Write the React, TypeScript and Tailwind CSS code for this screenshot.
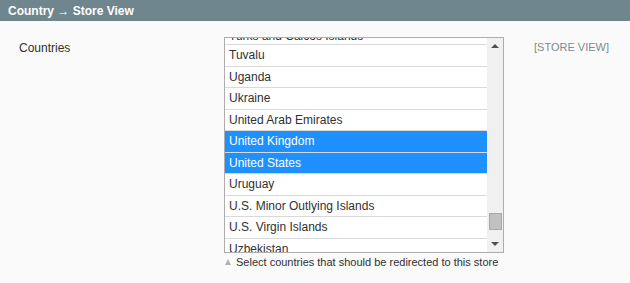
import React from 'react';

const countries = [
  'Turks and Caicos Islands',
  'Tuvalu',
  'Uganda',
  'Ukraine',
  'United Arab Emirates',
  'United Kingdom',
  'United States',
  'Uruguay',
  'U.S. Minor Outlying Islands',
  'U.S. Virgin Islands',
  'Uzbekistan',
  'Vanuatu',
];

const selected = ['United Kingdom', 'United States'];

export default function App() {
  return (
    <div className="w-[630px] h-[283px] bg-[#fafafa] font-['Liberation_Sans',Arial,sans-serif] text-[#303030] overflow-hidden">
      {/* header */}
      <div className="h-[21px] bg-[#6f868e] flex items-center pl-2 text-white text-[12px] font-bold">
        Country → Store View
      </div>

      {/* row */}
      <div className="flex pt-4">
        <div className="w-[224px] pl-[19px] pt-[2px] text-[12px] text-[#303030]">Countries</div>

        <div className="flex flex-col">
          {/* select box */}
          <div className="w-[280px] h-[216px] border border-[#adadad] bg-white flex">
            <div className="flex-1 overflow-hidden">
              <div className="-mt-[14.5px]">
                {countries.map((c, i) => {
                  const on = selected.includes(c);
                  return (
                    <div
                      key={c}
                      className={`h-[21.5px] border-b border-[#d9d9d9] pl-1 flex text-[12px] leading-[14px] ${
                        i === 0 ? 'items-end pb-[1px]' : 'items-center'
                      } ${on ? 'bg-[#1e90ff] text-white' : 'text-[#303030]'}`}
                    >
                      {c}
                    </div>
                  );
                })}
              </div>
            </div>

            {/* scrollbar */}
            <div className="w-[16px] bg-[#f0f0f0] flex flex-col items-center">
              <div className="h-[16px] flex items-center justify-center">
                <div className="w-0 h-0 border-l-[4px] border-r-[4px] border-b-[4px] border-l-transparent border-r-transparent border-b-[#505050]" />
              </div>
              <div className="flex-1 w-full flex flex-col justify-end pl-[2px] pr-[1px] pb-[6px]">
                <div className="h-[17px] bg-[#c1c1c1] border border-[#a8a8a8]" />
              </div>
              <div className="h-[16px] flex items-center justify-center">
                <div className="w-0 h-0 border-l-[4px] border-r-[4px] border-t-[4px] border-l-transparent border-r-transparent border-t-[#505050]" />
              </div>
            </div>
          </div>

          {/* hint */}
          <div className="flex items-center gap-[5px] pl-[1px] pt-[1px] text-[11px] text-[#303030]">
            <div className="w-0 h-0 border-l-[3.5px] border-r-[3.5px] border-b-[6px] border-l-transparent border-r-transparent border-b-[#b0b0b0]" />
            <span>Select countries that should be redirected to this store</span>
          </div>
        </div>

        <div className="pl-[30px] pt-[2px] text-[11px] text-[#808a92]">[STORE VIEW]</div>
      </div>
    </div>
  );
}
